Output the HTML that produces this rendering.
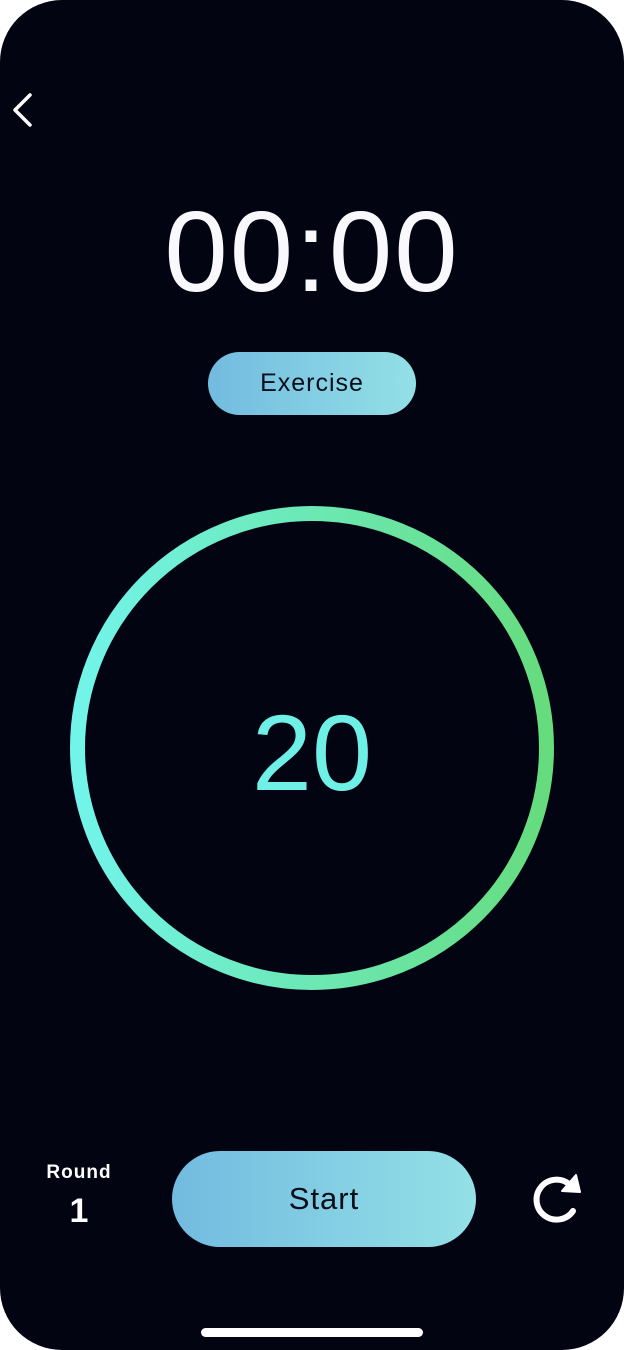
<!DOCTYPE html>
<html><head><meta charset="utf-8"><style>
html,body{margin:0;padding:0;background:#fff;}
.ph{position:relative;width:624px;height:1350px;background:#030412;border-radius:62px;overflow:hidden;font-family:"Liberation Sans",sans-serif;}
.abs{position:absolute;}
.grad{background:linear-gradient(90deg,#72bbe0,#93e0e6);}
</style></head><body><div class="ph">
<svg class="abs" style="left:8px;top:90px" width="30" height="40" viewBox="0 0 30 40"><path d="M22 5 L7 20 L22 35" stroke="#fff" stroke-width="3.5" fill="none" stroke-linecap="round" stroke-linejoin="round"/></svg>
<div class="abs" style="left:0;width:624px;top:188px;text-align:center;color:#f8f8fd;font-size:114px;line-height:130px;letter-spacing:2px;">00:00</div>
<div class="abs grad" style="left:208px;top:352px;width:208px;height:63px;border-radius:32px;text-align:center;line-height:63px;font-size:25px;color:#0a0d1a;letter-spacing:1px;">Exercise</div>
<svg class="abs" style="left:0;top:0" width="624" height="1350"><defs><linearGradient id="g" x1="0" y1="0" x2="1" y2="0"><stop offset="0" stop-color="#72f4ea"/><stop offset="1" stop-color="#66dc7e"/></linearGradient></defs><circle cx="312" cy="748" r="234.5" stroke="url(#g)" stroke-width="15" fill="none"/></svg>
<div class="abs" style="left:0;width:624px;top:693px;text-align:center;color:#6ff0e6;font-size:108px;line-height:120px;">20</div>
<div class="abs" style="left:30px;width:98px;top:1162px;text-align:center;color:#fff;font-size:19px;font-weight:bold;letter-spacing:1px;">Round</div>
<div class="abs" style="left:30px;width:98px;top:1192px;text-align:center;color:#fff;font-size:34px;font-weight:bold;">1</div>
<div class="abs grad" style="left:172px;top:1151px;width:304px;height:96px;border-radius:48px;text-align:center;line-height:96px;font-size:31px;color:#0a0d1a;letter-spacing:1px;">Start</div>
<svg class="abs" style="left:525px;top:1168px" width="60" height="60" viewBox="0 0 60 60"><path d="M48 43 A20 20 0 1 1 44 16" stroke="#fff" stroke-width="6" fill="none" stroke-linecap="round"/><path d="M37 23 L55 24 L51 7 Z" fill="#fff" stroke="#fff" stroke-width="2" stroke-linejoin="round"/></svg>
<div class="abs" style="left:201px;top:1328px;width:222px;height:9px;border-radius:5px;background:#fff;"></div>
</div></body></html>
